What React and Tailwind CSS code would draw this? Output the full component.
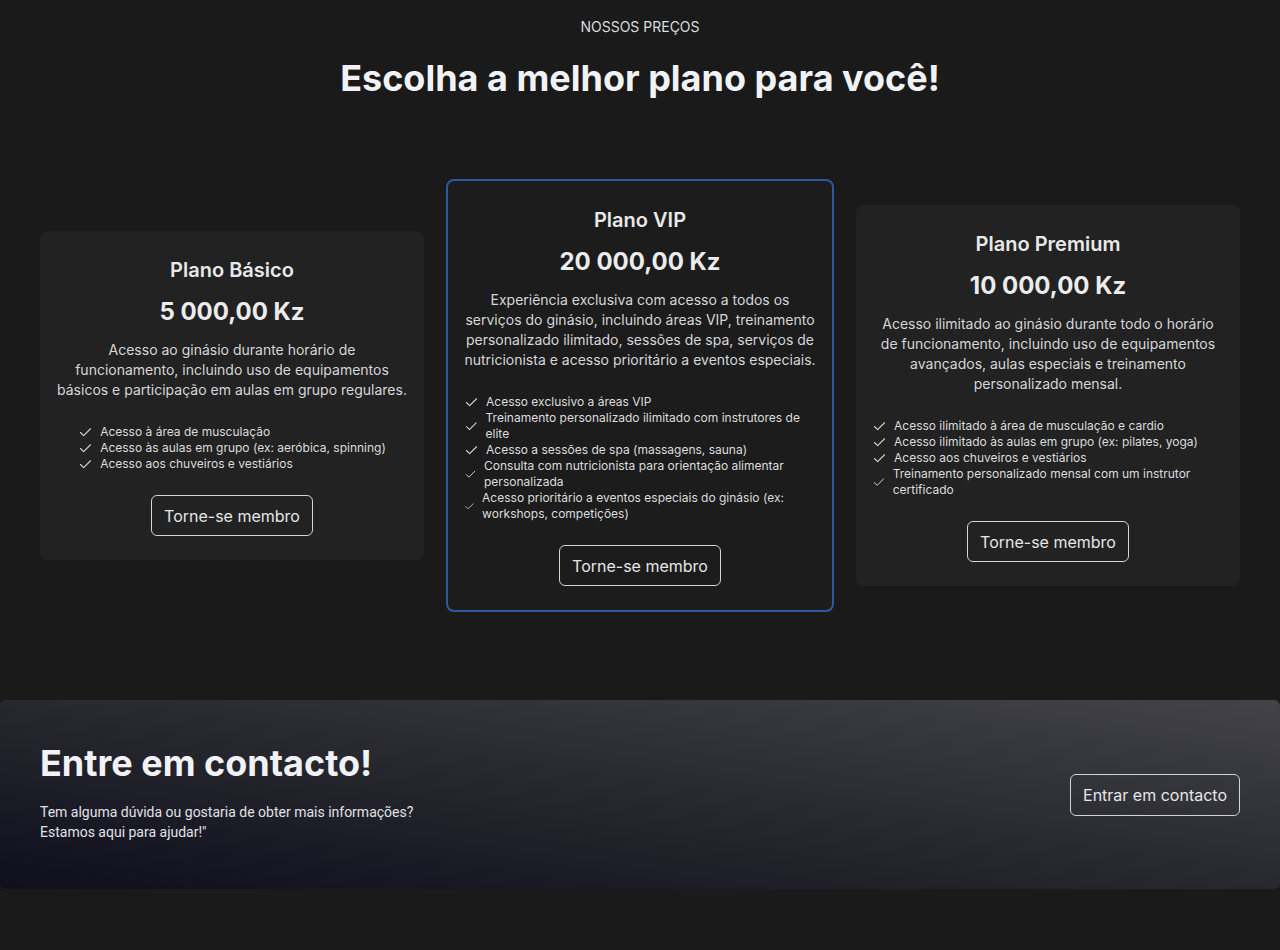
import React from "react";

const Check = () => (
  <svg
    className="w-[15px] h-[15px] text-[#d8d8da]"
    viewBox="0 0 24 24"
    fill="none"
    stroke="currentColor"
    strokeWidth="1.7"
    strokeLinecap="round"
    strokeLinejoin="round"
  >
    <path d="M20 6 9 17l-5-5" />
  </svg>
);

const plans = [
  {
    name: "Plano Básico",
    price: "5 000,00 Kz",
    desc: "Acesso ao ginásio durante horário de funcionamento, incluindo uso de equipamentos básicos e participação em aulas em grupo regulares.",
    items: [
      "Acesso à área de musculação",
      "Acesso às aulas em grupo (ex: aeróbica, spinning)",
      "Acesso aos chuveiros e vestiários",
    ],
    vip: false,
  },
  {
    name: "Plano VIP",
    price: "20 000,00 Kz",
    desc: "Experiência exclusiva com acesso a todos os serviços do ginásio, incluindo áreas VIP, treinamento personalizado ilimitado, sessões de spa, serviços de nutricionista e acesso prioritário a eventos especiais.",
    items: [
      "Acesso exclusivo a áreas VIP",
      "Treinamento personalizado ilimitado com instrutores de elite",
      "Acesso a sessões de spa (massagens, sauna)",
      "Consulta com nutricionista para orientação alimentar personalizada",
      "Acesso prioritário a eventos especiais do ginásio (ex: workshops, competições)",
    ],
    vip: true,
  },
  {
    name: "Plano Premium",
    price: "10 000,00 Kz",
    desc: "Acesso ilimitado ao ginásio durante todo o horário de funcionamento, incluindo uso de equipamentos avançados, aulas especiais e treinamento personalizado mensal.",
    items: [
      "Acesso ilimitado à área de musculação e cardio",
      "Acesso ilimitado às aulas em grupo (ex: pilates, yoga)",
      "Acesso aos chuveiros e vestiários",
      "Treinamento personalizado mensal com um instrutor certificado",
    ],
    vip: false,
  },
];

function Card({ plan }) {
  return (
    <div
      className={
        plan.vip
          ? "rounded-lg border-2 border-[#2d5a9e] bg-[#1c1c1c] px-4 pt-[25px] pb-6 flex flex-col items-center"
          : "rounded-lg bg-[#222222] px-4 pt-[25px] pb-6 flex flex-col items-center"
      }
    >
      <h3 className="text-xl leading-7 font-semibold text-[#e8e8ea]">{plan.name}</h3>
      <p className="mt-3 text-2xl leading-8 font-bold text-[#ececee]">{plan.price}</p>
      <p className="mt-3 text-sm leading-5 text-center text-[#d6d6d8]">{plan.desc}</p>
      <ul className="mt-6 mx-auto w-fit max-w-full flex flex-col">
        {plan.items.map((it) => (
          <li key={it} className="flex items-center gap-[7px] text-xs leading-4 text-[#dcdcde]">
            <Check />
            <span>{it}</span>
          </li>
        ))}
      </ul>
      <button className="mt-[23px] h-[41px] px-3 rounded-md border border-[#d4d4d4] text-base text-[#e6e6e8]">
        Torne-se membro
      </button>
    </div>
  );
}

export default function App() {
  return (
    <div
      className="min-h-[950px] bg-[#1a1a1a] text-white"
      style={{ fontFamily: "Inter, 'Noto Sans', sans-serif" }}
    >
      <section className="pt-[17px]">
        <p className="text-center text-sm leading-5 text-[#dcdcde]">NOSSOS PREÇOS</p>
        <h2 className="mt-[21px] text-center text-4xl leading-10 font-bold text-[#f1f2f6]">
          Escolha a melhor plano para você!
        </h2>
        <div className="mt-[81px] px-10 grid grid-cols-[384px_388px_384px] gap-[22px] items-center">
          {plans.map((p) => (
            <Card key={p.name} plan={p} />
          ))}
        </div>
      </section>
      <section className="mt-[88px] rounded-md bg-gradient-to-tr from-[#0f0f1d] via-[#28282f] to-[#434349] px-10 flex items-center justify-between">
        <div className="pt-[43px] pb-[47px]">
          <h2 className="text-4xl leading-10 font-bold text-[#f1f2f6]">Entre em contacto!</h2>
          <p
            className="mt-[19px] max-w-[390px] text-sm leading-5 text-[#e2e2e6]"
            style={{ fontFamily: "Roboto, 'Noto Sans', sans-serif" }}
          >
            Tem alguma dúvida ou gostaria de obter mais informações? Estamos aqui para ajudar!"
          </p>
        </div>
        <button className="h-[42px] px-3 rounded-md border border-[#d4d4d4] text-base text-[#e6e6e8]">
          Entrar em contacto
        </button>
      </section>
    </div>
  );
}
